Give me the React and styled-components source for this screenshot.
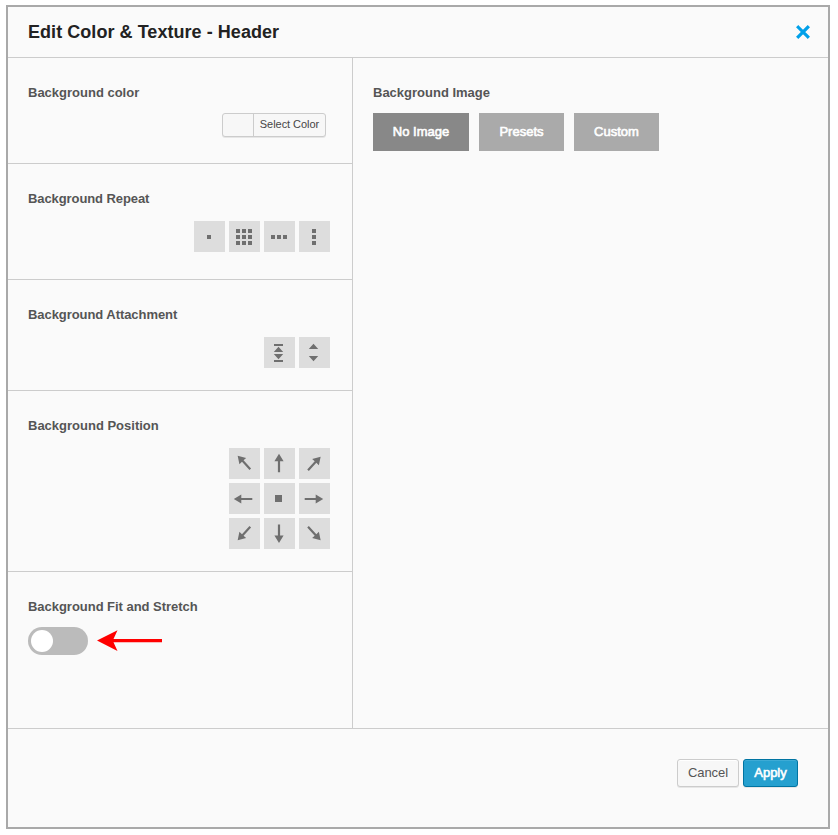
import React from 'react';
import styled, { createGlobalStyle } from 'styled-components';

const GlobalStyle = createGlobalStyle`
  * { box-sizing: border-box; }
  body { margin: 0; background: #fff; font-family: "Liberation Sans", Arial, sans-serif; }
  button { font-family: inherit; cursor: pointer; }
`;

const Page = styled.div`
  padding: 5px 8px 6px 6px;
  width: 838px;
  height: 835px;
`;

const Dialog = styled.div`
  display: flex;
  flex-direction: column;
  height: 824px;
  border: 2px solid #a9a9a9;
  background: #fafafa;
`;

const Header = styled.header`
  display: flex;
  align-items: center;
  justify-content: space-between;
  height: 51px;
  padding: 0 18px 0 20px;
  border-bottom: 1px solid #ccc;
`;

const Title = styled.h1`
  margin: 0;
  font-size: 18px;
  line-height: 22px;
  letter-spacing: 0.05px;
  color: #222;
`;

const CloseButton = styled.button`
  display: block;
  margin-bottom: 1px;
  padding: 0;
  border: 0;
  background: none;
  svg { display: block; }
`;

const Body = styled.div`
  display: flex;
  height: 670px;
`;

const Settings = styled.div`
  width: 345px;
  border-right: 1px solid #ccc;
`;

const Section = styled.section`
  height: ${(p) => p.$height}px;
  padding: 28px 22px 0 20px;
  border-bottom: ${(p) => (p.$last ? 0 : '1px solid #ccc')};
`;

const ImagePanel = styled.section`
  padding: 28px 20px 0;
`;

const Label = styled.h2`
  margin: 0;
  font-size: 13px;
  line-height: 14px;
  letter-spacing: ${(p) => p.$spacing || '0'};
  color: #555;
`;

const ColorPicker = styled.button`
  display: flex;
  width: 104px;
  height: 24px;
  margin: 13px 4px 0 auto;
  padding: 0;
  border: 1px solid #ccc;
  border-radius: 3px;
  background: #f7f7f7;
  box-shadow: 0 1px 0 rgba(0, 0, 0, 0.08);
  color: #464646;
  font-size: 11px;
  line-height: 21px;
`;

const Swatch = styled.span`
  width: 31px;
  height: 22px;
  border-right: 1px solid #ccc;
`;

const PickerText = styled.span`
  flex: 1;
  text-align: center;
  letter-spacing: -0.05px;
`;

const TileGrid = styled.div`
  display: grid;
  grid-template-columns: repeat(${(p) => p.$columns}, 31px);
  grid-auto-rows: 31px;
  gap: 4px;
  justify-content: end;
  margin-top: 15px;
`;

const Tile = styled.button`
  padding: 0;
  border: 0;
  background: #ddd;
  svg { display: block; fill: #6f6f6f; }
`;

const Switch = styled.button`
  display: flex;
  align-items: center;
  width: 60px;
  height: 28px;
  padding: 0 3px;
  border: 0;
  border-radius: 14px;
  background: #bbb;
`;

const SwitchRow = styled.div`
  display: flex;
  align-items: center;
  gap: 9px;
  margin-top: 13px;
`;

const Knob = styled.span`
  width: 22px;
  height: 22px;
  border-radius: 50%;
  background: #fff;
`;

const TabRow = styled.div`
  display: flex;
  gap: 10px;
  margin-top: 13px;
`;

const Tab = styled.button`
  width: ${(p) => p.$width}px;
  height: 38px;
  padding: 0 0 2px;
  border: 0;
  background: ${(p) => (p.$active ? '#888' : '#aaa')};
  color: #fff;
  font-size: 13px;
  -webkit-text-stroke: 0.6px #fff;
`;

const Footer = styled.footer`
  display: flex;
  justify-content: flex-end;
  gap: 4px;
  flex: 1;
  padding: 30px 30px 0 0;
  border-top: 1px solid #ccc;
`;

const ActionButton = styled.button`
  width: ${(p) => (p.$primary ? 55 : 62)}px;
  height: 28px;
  padding: 0 0 2px;
  border: 1px solid ${(p) => (p.$primary ? '#0074a2' : '#ccc')};
  border-radius: 3px;
  background: ${(p) => (p.$primary ? '#25a0cf' : '#f7f7f7')};
  box-shadow: inset 0 1px 0 ${(p) => (p.$primary ? 'rgba(120, 200, 230, 0.3)' : '#fff')},
    0 1px 0 rgba(0, 0, 0, 0.08);
  color: ${(p) => (p.$primary ? '#fff' : '#555')};
  font-size: 13px;
  letter-spacing: -0.05px;
  -webkit-text-stroke: ${(p) => (p.$primary ? '0.6px #fff' : '0')};
`;

const Dots = ({ points }) => (
  <svg width="31" height="31" shapeRendering="crispEdges">
    {points.map(([x, y]) => <rect key={`${x}-${y}`} x={x} y={y} width="4" height="4" />)}
  </svg>
);

const Arrow = ({ x, y, angle, length = 18 }) => (
  <svg width="31" height="31">
    <path
      transform={`translate(${x} ${y}) rotate(${angle})`}
      d={`M0 -0.5L4.6 7H1.1V${length}H-1.1V7H-4.6Z`}
    />
  </svg>
);

const steps = [7, 13, 19];
const repeats = [
  { name: 'No repeat', points: [[13, 14]] },
  { name: 'Tile', points: steps.flatMap((x) => steps.map((y) => [x, y + 1])) },
  { name: 'Repeat horizontally', points: steps.map((x) => [x, 14]) },
  { name: 'Repeat vertically', points: steps.map((y) => [13, y + 1]) },
];

const positions = [
  { name: 'Top left', x: 9, y: 8, angle: -43 },
  { name: 'Top', x: 15, y: 6.3, angle: 0 },
  { name: 'Top right', x: 21.3, y: 9, angle: 43 },
  { name: 'Left', x: 5.3, y: 16, angle: -90 },
  { name: 'Center' },
  { name: 'Right', x: 23.7, y: 16, angle: 90 },
  { name: 'Bottom left', x: 9, y: 22, angle: -137 },
  { name: 'Bottom', x: 15, y: 24.5, angle: 180 },
  { name: 'Bottom right', x: 21.3, y: 22, angle: 137 },
];

export default function App() {
  return (
    <Page>
      <GlobalStyle />
      <Dialog role="dialog">
        <Header>
          <Title>Edit Color &amp; Texture - Header</Title>
          <CloseButton aria-label="Close">
            <svg width="14" height="14" viewBox="0 0 14 14">
              <path d="M2.3 2.3L11.7 11.7M11.7 2.3L2.3 11.7" stroke="#00a0e9" strokeWidth="3.2" strokeLinecap="square" />
            </svg>
          </CloseButton>
        </Header>
        <Body>
          <Settings>
            <Section $height={106}>
              <Label>Background color</Label>
              <ColorPicker>
                <Swatch />
                <PickerText>Select Color</PickerText>
              </ColorPicker>
            </Section>
            <Section $height={116}>
              <Label $spacing="-0.09px">Background Repeat</Label>
              <TileGrid $columns={4}>
                {repeats.map((r) => (
                  <Tile key={r.name} aria-label={r.name}><Dots points={r.points} /></Tile>
                ))}
              </TileGrid>
            </Section>
            <Section $height={111}>
              <Label $spacing="-0.06px">Background Attachment</Label>
              <TileGrid $columns={2}>
                <Tile aria-label="Fixed">
                  <svg width="31" height="31">
                    <path d="M10 7H19V9H10ZM14.5 9.8L19.2 15H9.8ZM9.8 17H19.2L14.5 22.2ZM10 23H19V25H10Z" />
                  </svg>
                </Tile>
                <Tile aria-label="Scroll">
                  <svg width="31" height="31">
                    <path d="M14.5 6.8L19.2 12H9.8ZM9.8 19H19.2L14.5 24.2Z" />
                  </svg>
                </Tile>
              </TileGrid>
            </Section>
            <Section $height={181}>
              <Label>Background Position</Label>
              <TileGrid $columns={3}>
                {positions.map((p) => (
                  <Tile key={p.name} aria-label={p.name}>
                    {p.angle === undefined
                      ? <svg width="31" height="31"><rect x="11" y="12" width="7" height="7" /></svg>
                      : <Arrow x={p.x} y={p.y} angle={p.angle} />}
                  </Tile>
                ))}
              </TileGrid>
            </Section>
            <Section $height={156} $last>
              <Label $spacing="-0.03px">Background Fit and Stretch</Label>
              <SwitchRow>
                <Switch role="switch" aria-checked="false" aria-label="Fit and stretch"><Knob /></Switch>
                <svg width="65" height="22">
                  <path d="M0 10.5L20.5 0.3L16.5 9H65V12.3H16.5L20.5 20.9Z" fill="#f00" />
                </svg>
              </SwitchRow>
            </Section>
          </Settings>
          <ImagePanel>
            <Label>Background Image</Label>
            <TabRow>
              <Tab $width={96} $active>No Image</Tab>
              <Tab $width={85}>Presets</Tab>
              <Tab $width={85}>Custom</Tab>
            </TabRow>
          </ImagePanel>
        </Body>
        <Footer>
          <ActionButton>Cancel</ActionButton>
          <ActionButton $primary>Apply</ActionButton>
        </Footer>
      </Dialog>
    </Page>
  );
}
